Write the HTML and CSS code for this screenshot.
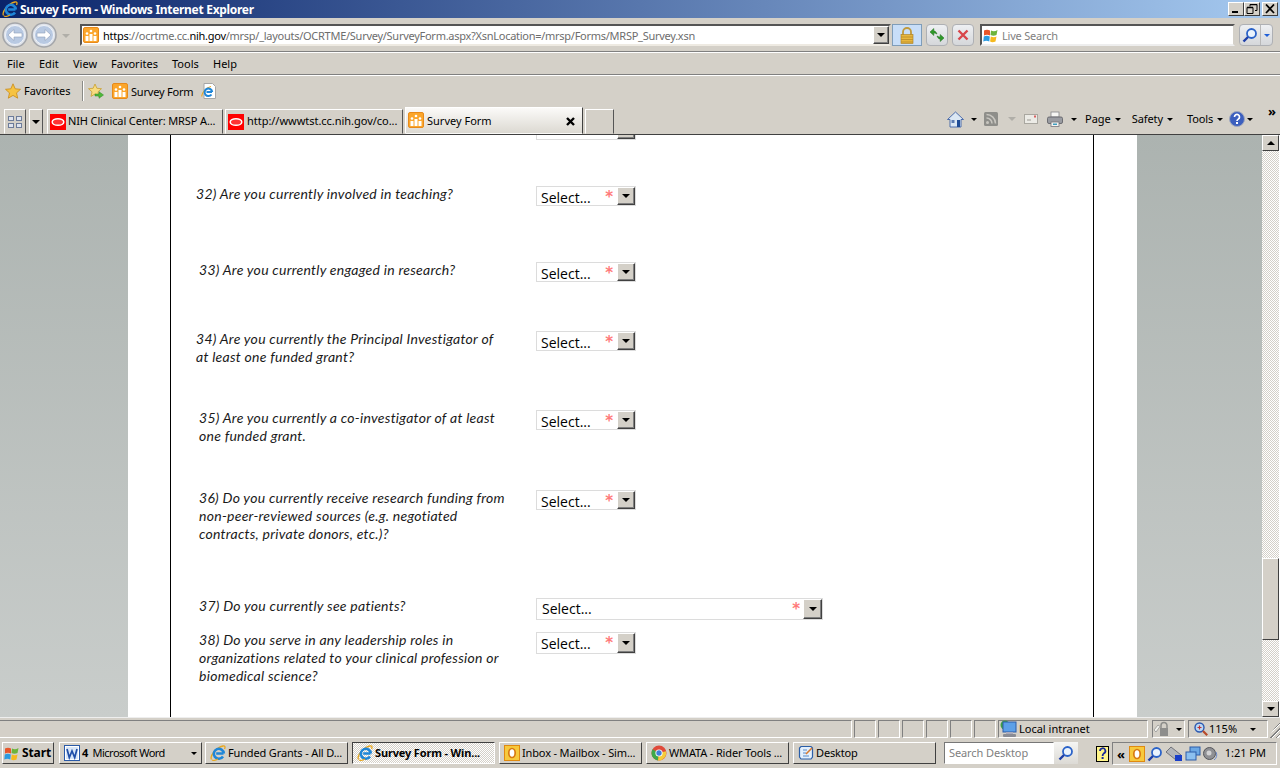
FILE: index.html
```html
<!DOCTYPE html>
<html lang="en">
<head>
<meta charset="utf-8">
<title>Survey Form - Windows Internet Explorer</title>
<link rel="stylesheet" href="styles.css">
</head>
<body>
<svg class="sprite" width="0" height="0" aria-hidden="true">
  <defs>
    <symbol id="ie" viewBox="0 0 16 16">
      <path d="M1.500 14.500C-.5 11 6 2.500 13 1c2-.4 2.500 1 1.500 3" fill="none" stroke="#e8a820" stroke-width="1.300"/>
      <path d="M13.500 8.500H6.200M13 11.500a5 5 0 1 1 .8-3" fill="none" stroke="#1f86d8" stroke-width="2.600"/>
      <path d="M2 15c1.500 1 4 .2 6-1" fill="none" stroke="#e8a820" stroke-width="1.100"/>
    </symbol>
    <symbol id="iepage" viewBox="0 0 16 16">
      <path d="M3 .5h8.500l3 3v12H3z" fill="#fff" stroke="#a6a6a6"/>
      <path d="M1 13.500C0 10.500 5 4.500 10 3.500" fill="none" stroke="#e8a820" stroke-width="1.100"/>
      <path d="M11 9H5.500M10.500 11.500a3.800 3.800 0 1 1 .7-2.500" fill="none" stroke="#1f86d8" stroke-width="2"/>
    </symbol>
    <symbol id="hive" viewBox="0 0 16 16">
      <rect x=".5" y=".5" width="15" height="15" rx="1.500" fill="#fba62c" stroke="#e88a1a"/>
      <rect x="2.500" y="9" width="3" height="5" fill="#fff"/><rect x="6.500" y="7" width="3" height="7" fill="#fff"/><rect x="10.500" y="9" width="3" height="5" fill="#fff"/>
      <circle cx="4" cy="6.500" r="1.300" fill="#fff"/><circle cx="8" cy="4" r="1.300" fill="#fff"/><circle cx="12" cy="6.500" r="1.300" fill="#fff"/>
    </symbol>
    <symbol id="oracle" viewBox="0 0 16 16">
      <rect width="16" height="16" fill="#f00"/>
      <ellipse cx="8" cy="8" rx="5.800" ry="3.300" fill="#f33" stroke="#fff" stroke-width="1.500"/>
    </symbol>
    <symbol id="star" viewBox="0 0 16 16">
      <path d="M8 .8l2.200 5 5.300.5-4 3.600 1.200 5.300L8 12.400l-4.700 2.800 1.200-5.300-4-3.600 5.300-.5z" fill="#f6c342" stroke="#c98a18" stroke-width=".8"/>
    </symbol>
    <symbol id="addfav" viewBox="0 0 16 16">
      <path d="M7 1l1.900 4.300 4.600.4-3.500 3.100 1 4.600L7 11l-4 2.400 1-4.600L.5 5.700l4.600-.4z" fill="#f8dc80" stroke="#c9a030" stroke-width=".8"/>
      <path d="M7 11h4V8.700l4.500 3.300-4.500 3.300V13H7z" fill="#4fb83a" stroke="#2c8a20" stroke-width=".5"/>
    </symbol>
    <symbol id="back" viewBox="0 0 26 26">
      <circle cx="13" cy="13" r="12" fill="#dfe3ea" stroke="#a4a6aa" stroke-width="1.600"/>
      <circle cx="13" cy="13" r="9.500" fill="#b8c9e2" stroke="#eef2f8"/>
      <path d="M6 13l6-5.500V11h8v4h-8v3.500z" fill="#fff" stroke="#8f9eb8" stroke-width=".6"/>
    </symbol>
    <symbol id="forward" viewBox="0 0 26 26">
      <circle cx="13" cy="13" r="12" fill="#dfe3ea" stroke="#a4a6aa" stroke-width="1.600"/>
      <circle cx="13" cy="13" r="9.500" fill="#b8c9e2" stroke="#eef2f8"/>
      <path d="M20 13l-6-5.500V11H6v4h8v3.500z" fill="#fff" stroke="#8f9eb8" stroke-width=".6"/>
    </symbol>
    <symbol id="lock" viewBox="0 0 14 17">
      <path d="M3 8V5a4 4 0 0 1 8 0v3" fill="none" stroke="#c09a3c" stroke-width="1.800"/>
      <rect x="1" y="7.500" width="12" height="9" fill="#e8b73e" stroke="#a87c20" stroke-width=".6"/>
      <path d="M1 10h12M1 12.500h12M1 15h12" stroke="#b88a2a" stroke-width=".8"/>
    </symbol>
    <symbol id="refresh" viewBox="0 0 16 16">
      <path d="M8 7C7 4.500 6 4 4.800 4V1.500L1 5l3.800 3.500V6C6 6 6.800 6.500 8 7z" fill="#2f9a2a" stroke="#1f6e1c" stroke-width=".5"/>
      <path d="M8 9c1 2.500 2 3 3.200 3v2.500L15 11l-3.800-3.500V10C10 10 9.200 9.500 8 9z" fill="#2f9a2a" stroke="#1f6e1c" stroke-width=".5"/>
    </symbol>
    <symbol id="stop" viewBox="0 0 12 12">
      <path d="M1.500 1.500l9 9M10.500 1.500l-9 9" stroke="#d8454a" stroke-width="2.400"/>
    </symbol>
    <symbol id="winflag" viewBox="0 0 16 16">
      <path d="M1 3.500c2-1 4-1 6 0v5c-2-1-4-1-6 0z" fill="#e8562a"/>
      <path d="M8 3.500c2 1 4 1 6.500-.5l-1 5c-2 1-4 1-6 0z" fill="#6cb43c"/>
      <path d="M.8 9.500c2-1 4-1 6 0l-.5 5c-2-1-4-1-6 0z" fill="#2b9be0"/>
      <path d="M7.800 9.500c2 1 4 1 5.700 0l-1 5c-2 1-4 1-5.400 0z" fill="#f5b91e"/>
    </symbol>
    <symbol id="mag" viewBox="0 0 16 16">
      <circle cx="9.500" cy="6.500" r="4.500" fill="#eaf3fd" stroke="#2a62c8" stroke-width="1.800"/>
      <path d="M6 10l-4.500 4.500" stroke="#1f3fa8" stroke-width="2.400"/>
    </symbol>
    <symbol id="home" viewBox="0 0 17 17">
      <path d="M8.500 1L.5 8.500H3V16h11V8.500h2.500z" fill="#dce8f4" stroke="#3f62a6" stroke-width=".9"/>
      <rect x="4.500" y="9" width="3" height="3" fill="#5c7cb2"/><rect x="10" y="9" width="3" height="7" fill="#1f4c96"/>
    </symbol>
    <symbol id="feed" viewBox="0 0 14 14">
      <rect width="14" height="14" rx="1.500" fill="#8e8e8a"/>
      <circle cx="3.500" cy="10.500" r="1.500" fill="#c8c6c0"/>
      <path d="M2.500 6A5.500 5.500 0 0 1 8 11.500M2.500 2.500a9 9 0 0 1 9 9" fill="none" stroke="#c8c6c0" stroke-width="1.500"/>
    </symbol>
    <symbol id="mail" viewBox="0 0 14 10">
      <rect x=".5" y=".5" width="13" height="9" fill="#ecebe6" stroke="#a9a7a0"/>
      <rect x="10" y="1.500" width="2" height="2" fill="#d86060"/><path d="M3 6h4" stroke="#9c9a94"/>
    </symbol>
    <symbol id="printer" viewBox="0 0 16 16">
      <rect x="4" y="1" width="8" height="5" fill="#f6f6f4" stroke="#85858a" stroke-width=".8"/>
      <rect x=".5" y="6" width="15" height="6.500" rx="1.500" fill="#9a9ca2" stroke="#5b5c62" stroke-width=".8"/>
      <rect x="4" y="11" width="8" height="4.500" fill="#f2f2f0" stroke="#75757a" stroke-width=".8"/>
      <rect x="6" y="12.500" width="4" height="1.500" fill="#3f9ec0"/>
    </symbol>
    <symbol id="help" viewBox="0 0 16 16">
      <circle cx="8" cy="8" r="7.500" fill="#3c5fbe" stroke="#9da6bd"/>
      <path d="M5.500 6a2.500 2.500 0 1 1 3.800 2.100C8.400 8.700 8 9 8 10" fill="none" stroke="#fff" stroke-width="1.700"/>
      <rect x="7" y="11" width="2" height="2" fill="#fff"/>
    </symbol>
    <symbol id="word" viewBox="0 0 16 16">
      <rect x=".5" y=".5" width="15" height="15" fill="#fff" stroke="#2a5aa8"/>
      <rect x="2" y="2" width="12" height="12" fill="#d8e6f8"/>
      <path d="M3 4l2.300 8.500L8 6l2.700 6.500L13 4" fill="none" stroke="#1f4ea8" stroke-width="1.700"/>
    </symbol>
    <symbol id="outlook" viewBox="0 0 16 16">
      <rect x=".5" y=".5" width="15" height="15" fill="#f7c93c" stroke="#e08a10"/>
      <ellipse cx="8" cy="8" rx="3.200" ry="4.500" fill="#fff" stroke="#d87a10" stroke-width="1.700"/>
    </symbol>
    <symbol id="chrome" viewBox="0 0 16 16">
      <circle cx="8" cy="8" r="7.500" fill="#e04a3a"/>
      <path d="M8 8L1.500 4.200A7.500 7.500 0 0 0 7 15.400z" fill="#3ea84a"/>
      <path d="M8 8l7-1.800a7.500 7.500 0 0 1-8 9.200z" fill="#f4cc3a"/>
      <circle cx="8" cy="8" r="3.600" fill="#fff"/><circle cx="8" cy="8" r="2.700" fill="#3f7fd8"/>
    </symbol>
    <symbol id="desktop" viewBox="0 0 16 16">
      <path d="M3 1.500h10L14.500 3v9L13 14H3l-1.500-2V3z" fill="#e4f0fc" stroke="#2a5ea8" stroke-width="1.200"/>
      <path d="M5 5h4M5 8h3M5 11h6" stroke="#5a8ac8"/><path d="M8 9l6-6" stroke="#d87a30" stroke-width="1.600"/>
    </symbol>
    <symbol id="globe" viewBox="0 0 18 18">
      <circle cx="5" cy="5" r="4.500" fill="#3fa046"/>
      <rect x="3" y="2" width="13" height="10" fill="#5ca0e8" stroke="#2d5ca8"/>
      <rect x="6" y="12" width="7" height="2" fill="#aab"/><rect x="3" y="14" width="13" height="3" rx="1" fill="#8a8c94"/>
    </symbol>
    <symbol id="seclock" viewBox="0 0 18 16">
      <path d="M1 9l4-5 2 1.500L3 11z" fill="#f2f2ee" stroke="#8a8a88" stroke-width=".7"/>
      <path d="M8 7V4.500a3 3 0 0 1 6 0V7" fill="none" stroke="#8d8d8a" stroke-width="1.500"/>
      <rect x="7" y="7" width="8" height="8" fill="#8e8e8c"/>
    </symbol>
    <symbol id="zoom" viewBox="0 0 14 14">
      <circle cx="5.500" cy="5.500" r="4.500" fill="#bcd8f4" stroke="#2a58b0" stroke-width="1.400"/>
      <path d="M9 9l4.200 4.200" stroke="#b84a2a" stroke-width="2.200"/>
      <path d="M3.500 5.500h4M5.500 3.500v4" stroke="#c03030" stroke-width="1.200"/>
    </symbol>
    <symbol id="helpbook" viewBox="0 0 14 16">
      <rect x=".5" y=".5" width="12" height="15" fill="#fff58a" stroke="#000"/>
      <path d="M4 5a2.700 2.700 0 1 1 3.800 2.400C7 8 6.600 8.500 6.600 10" fill="none" stroke="#1a2a9a" stroke-width="1.800"/>
      <rect x="5.600" y="11" width="2" height="2" fill="#1a2a9a"/>
    </symbol>
    <symbol id="traynet" viewBox="0 0 16 16">
      <rect x="5" y="1" width="10" height="8" fill="#6ca8e4" stroke="#2d5ca8"/><rect x="1" y="6" width="10" height="8" fill="#8cc0f0" stroke="#2d5ca8"/>
    </symbol>
    <symbol id="traydrive" viewBox="0 0 18 16">
      <path d="M1 6l5-5 10 8-5 5z" fill="#b4b6ba" stroke="#70727a"/><rect x="10" y="9" width="7" height="6" fill="#1a3ec8"/>
    </symbol>
    <symbol id="traysound" viewBox="0 0 16 16">
      <circle cx="6.500" cy="7.500" r="6" fill="#8f9094" stroke="#55565c"/><circle cx="6" cy="7" r="2.500" fill="#d2d2d4"/>
      <path d="M13 6a6 6 0 0 1-2 8" fill="none" stroke="#6a88c8"/>
    </symbol>
    <symbol id="cap-min" viewBox="0 0 12 10"><rect x="2" y="7" width="6" height="2" fill="#000"/></symbol>
    <symbol id="cap-max" viewBox="0 0 12 10"><path d="M4.500 2.500V.5h7v6h-2M1.500 3.500h6v6h-6z" transform="translate(-.5 0)" fill="none" stroke="#000"/><path d="M4 .5h7M1 3.500h6" stroke="#000" stroke-width="1.400"/></symbol>
    <symbol id="cap-close" viewBox="0 0 12 10"><path d="M2 .5l8 8.500M10 .5L2 9" stroke="#000" stroke-width="1.800"/></symbol>
    <symbol id="tabx" viewBox="0 0 9 9"><path d="M1 1l7 7M8 1L1 8" stroke="#000" stroke-width="2.400"/></symbol>
  </defs>
</svg>

<div class="window">
  <header class="titlebar">
    <svg class="ic16 title-ic"><use href="#ie"/></svg>
    <span class="title-text">Survey Form - Windows Internet Explorer</span>
    <div class="winbtns">
      <span class="winbtn"><svg class="capglyph"><use href="#cap-min"/></svg></span>
      <span class="winbtn"><svg class="capglyph"><use href="#cap-max"/></svg></span>
      <span class="winbtn winbtn-close"><svg class="capglyph"><use href="#cap-close"/></svg></span>
    </div>
  </header>

  <div class="addressbar">
    <svg class="navbtn"><use href="#back"/></svg>
    <svg class="navbtn nav-fwd"><use href="#forward"/></svg>
    <span class="tri tri-pale nav-drop"></span>
    <div class="urlbox">
      <svg class="ic16"><use href="#hive"/></svg>
      <span class="url"><b>https</b>://ocrtme.cc.<b>nih.gov</b>/mrsp/_layouts/OCRTME/Survey/SurveyForm.aspx?XsnLocation=/mrsp/Forms/MRSP_Survey.xsn</span>
      <span class="dropbtn url-drop"><span class="tri"></span></span>
    </div>
    <span class="lockbtn"><svg class="ic-lock"><use href="#lock"/></svg></span>
    <span class="softbtn"><svg class="ic16"><use href="#refresh"/></svg></span>
    <span class="softbtn stopbtn"><svg class="ic12"><use href="#stop"/></svg></span>
    <div class="searchbox">
      <svg class="ic16"><use href="#winflag"/></svg>
      <span class="searchhint">Live Search</span>
    </div>
    <div class="searchgo">
      <span class="go-mag"><svg class="ic16"><use href="#mag"/></svg></span>
      <span class="go-drop"><span class="tri tri-blue"></span></span>
    </div>
  </div>

  <nav class="menubar">
    <span class="m-file">File</span><span class="m-edit">Edit</span><span class="m-view">View</span><span class="m-fav">Favorites</span><span class="m-tools">Tools</span><span>Help</span>
  </nav>

  <div class="favbar">
    <svg class="ic16"><use href="#star"/></svg>
    <span class="fav-label">Favorites</span>
    <span class="fav-sep"></span>
    <svg class="ic16 fav-add"><use href="#addfav"/></svg>
    <svg class="ic16 fav-hive"><use href="#hive"/></svg>
    <span class="fav-link">Survey Form</span>
    <svg class="ic16 fav-page"><use href="#iepage"/></svg>
  </div>

  <div class="tabbar">
    <span class="quick"><span class="quickgrid"><i></i><i></i><i></i><i></i></span></span>
    <span class="quickdrop"><span class="tri"></span></span>
    <span class="tab tab-1"><svg class="ic16"><use href="#oracle"/></svg><span class="tab-text">NIH Clinical Center: MRSP A...</span></span>
    <span class="tab tab-2"><svg class="ic16"><use href="#oracle"/></svg><span class="tab-text">http://wwwtst.cc.nih.gov/co...</span></span>
    <span class="tab tab-active"><svg class="ic16"><use href="#hive"/></svg><span class="tab-text">Survey Form</span><svg class="tab-close"><use href="#tabx"/></svg></span>
    <span class="tab tab-new"></span>
    <div class="tools">
      <svg class="tool-home"><use href="#home"/></svg><span class="tri tool-a1"></span>
      <svg class="tool-feed"><use href="#feed"/></svg><span class="tri tri-pale tool-a2"></span>
      <svg class="tool-mail"><use href="#mail"/></svg>
      <svg class="tool-print"><use href="#printer"/></svg><span class="tri tool-a3"></span>
      <span class="tool-label t-page">Page<span class="tri"></span></span>
      <span class="tool-label t-safety">Safety<span class="tri"></span></span>
      <span class="tool-label t-tools">Tools<span class="tri"></span></span>
      <svg class="ic16 tool-help"><use href="#help"/></svg><span class="tri tool-a4"></span>
      <span class="chev">»</span>
    </div>
  </div>

  <main class="viewport">
    <div class="gutter gutter-left"></div>
    <div class="page">
      <div class="frame">
        <form class="survey">
          <div class="question"></div>
          <div class="select"><span class="dropbtn"><span class="tri"></span></span></div>

          <div class="question">32) Are you currently involved in teaching?</div>
          <div class="select"><span class="select-text">Select...</span><span class="req">*</span><span class="dropbtn"><span class="tri"></span></span></div>

          <div class="question q-in">33) Are you currently engaged in research?</div>
          <div class="select"><span class="select-text">Select...</span><span class="req">*</span><span class="dropbtn"><span class="tri"></span></span></div>

          <div class="question">34) Are you currently the Principal Investigator of<br>at least one funded grant?</div>
          <div class="select"><span class="select-text">Select...</span><span class="req">*</span><span class="dropbtn"><span class="tri"></span></span></div>

          <div class="question q-in">35) Are you currently a co-investigator of at least<br>one funded grant.</div>
          <div class="select"><span class="select-text">Select...</span><span class="req">*</span><span class="dropbtn"><span class="tri"></span></span></div>

          <div class="question q-in">36) Do you currently receive research funding from<br>non-peer-reviewed sources (e.g. negotiated<br>contracts, private donors, etc.)?</div>
          <div class="select"><span class="select-text">Select...</span><span class="req">*</span><span class="dropbtn"><span class="tri"></span></span></div>

          <div class="question q-in">37) Do you currently see patients?</div>
          <div class="select select-wide"><span class="select-text">Select...</span><span class="req">*</span><span class="dropbtn"><span class="tri"></span></span></div>

          <div class="question q-in">38) Do you serve in any leadership roles in<br>organizations related to your clinical profession or<br>biomedical science?</div>
          <div class="select select-tall"><span class="select-text">Select...</span><span class="req">*</span><span class="dropbtn"><span class="tri"></span></span></div>
        </form>
      </div>
    </div>
    <div class="gutter gutter-right"></div>
    <div class="scrollbar">
      <span class="sb-btn"><span class="tri tri-up"></span></span>
      <span class="sb-track sb-track-top"></span>
      <span class="sb-thumb"></span>
      <span class="sb-track"></span>
      <span class="sb-btn"><span class="tri"></span></span>
    </div>
  </main>

  <div class="statusbar">
    <span class="st-pane st-main"></span>
    <span class="st-pane st-small"></span><span class="st-pane st-small"></span><span class="st-pane st-small"></span><span class="st-pane st-small"></span><span class="st-pane st-small"></span><span class="st-pane st-small"></span>
    <span class="st-pane st-zone"><svg class="ic-globe"><use href="#globe"/></svg><span class="st-text">Local intranet</span></span>
    <span class="st-pane st-sec"><svg class="ic-sec"><use href="#seclock"/></svg><span class="tri"></span></span>
    <span class="st-pane st-zoom"><svg class="ic-zoom"><use href="#zoom"/></svg><span class="st-text">115%</span><span class="tri"></span></span>
    <span class="grip"></span>
  </div>

  <footer class="taskbar">
    <span class="task task-start"><svg class="ic16"><use href="#winflag"/></svg>Start</span>
    <span class="task task-word"><svg class="ic16"><use href="#word"/></svg><span class="task-text"><b>4</b>&nbsp; Microsoft Word</span><span class="tri"></span></span>
    <span class="task"><svg class="ic16"><use href="#ie"/></svg><span class="task-text">Funded Grants - All D...</span></span>
    <span class="task task-active"><svg class="ic16"><use href="#ie"/></svg><span class="task-text">Survey Form - Win...</span></span>
    <span class="task"><svg class="ic16"><use href="#outlook"/></svg><span class="task-text">Inbox - Mailbox - Sim...</span></span>
    <span class="task"><svg class="ic16"><use href="#chrome"/></svg><span class="task-text">WMATA - Rider Tools ...</span></span>
    <span class="task"><svg class="ic16"><use href="#desktop"/></svg><span class="task-text">Desktop</span></span>
    <div class="desk-search">
      <span class="desk-input">Search Desktop</span>
      <span class="desk-go"><svg class="ic16"><use href="#mag"/></svg></span>
    </div>
    <svg class="tray-help"><use href="#helpbook"/></svg>
    <div class="tray">
      <span class="tray-chev">«</span>
      <svg class="ic16"><use href="#outlook"/></svg>
      <svg class="ic16"><use href="#mag"/></svg>
      <svg class="tray-drive"><use href="#traydrive"/></svg>
      <svg class="ic16"><use href="#traynet"/></svg>
      <svg class="ic16"><use href="#traysound"/></svg>
      <span class="clock">1:21 PM</span>
    </div>
  </footer>
</div>
</body>
</html>
```

FILE: styles.css
```css
* { box-sizing: border-box; }
html, body { margin: 0; padding: 0; height: 100%; overflow: hidden; }
body { background: #d4d0c8; font-family: "Noto Sans", Tahoma, sans-serif; font-size: 11px; color: #000; }
.sprite { position: absolute; }
svg { display: block; flex: none; }
.window { width: 1280px; height: 768px; display: flex; flex-direction: column; }
.ic16 { width: 16px; height: 16px; }
.ic12 { width: 12px; height: 12px; }

.tri { display: inline-block; width: 0; height: 0; border-style: solid; border-color: #000 transparent transparent; border-width: 3px 3px 0; flex: none; }
.tri-pale { border-width: 4px 4px 0; border-top-color: #b0aea8; }
.tri-blue { border-top-color: #1f5fd8; }
.dropbtn .tri, .sb-btn .tri, .quickdrop .tri { border-width: 4px 4px 0; }
.sb-btn .tri-up { border-width: 0 4px 4px; border-color: transparent transparent #000; }

/* title bar */
.titlebar { height: 18px; display: flex; align-items: center; padding-left: 2px; background: linear-gradient(90deg, #0a246a, #a6caf0); }
.title-text { margin-left: 2px; color: #fff; font-weight: 700; font-size: 12px; letter-spacing: -.3px; white-space: nowrap; }
.winbtns { margin-left: auto; display: flex; padding-right: 2px; }
.winbtn { width: 16px; height: 14px; background: #d4d0c8; border: 1px solid; border-color: #fff #404040 #404040 #fff; display: flex; align-items: center; justify-content: center; }
.winbtn-close { margin-left: 2px; }
.capglyph { width: 12px; height: 10px; }

/* address row */
.addressbar { height: 33px; display: flex; align-items: center; padding: 1px 0 0 2px; }
.navbtn { width: 26px; height: 26px; }
.nav-fwd { margin-left: 3px; }
.nav-drop { margin: 2px 0 0 5px; }
.urlbox { margin-left: 10px; width: 811px; height: 22px; background: #fff; border: 2px solid; border-color: #555 #d4d0c8 #eeeae2 #555; display: flex; align-items: center; padding-left: 1px; }
.url { margin-left: 4px; color: #6d6d6d; white-space: nowrap; letter-spacing: -.27px; }
.url b { color: #000; font-weight: 400; }
.url-drop { margin-left: auto; height: 18px; width: 16px; }
.dropbtn { background: #d4d0c8; border: 1px solid; border-color: #fff #404040 #404040 #fff; display: flex; align-items: center; justify-content: center; box-shadow: inset -1px -1px 0 #808080; }
.lockbtn { margin-left: 1px; width: 30px; height: 22px; background: #c8def8; border: 1px solid #7f9db9; display: flex; align-items: center; justify-content: center; }
.ic-lock { width: 14px; height: 17px; }
.softbtn { margin-left: 4px; width: 22px; height: 22px; border: 1px solid #aeb0b4; border-radius: 4px; background: linear-gradient(#eef0f3, #d5d7da); display: flex; align-items: center; justify-content: center; }
.searchbox { margin-left: 6px; width: 255px; height: 22px; background: #fff; border: 2px solid; border-color: #555 #d4d0c8 #eee #555; display: flex; align-items: center; padding-left: 1px; }
.searchhint { margin-left: 3px; color: #7f7f7f; letter-spacing: -.2px; }
.searchgo { margin-left: 4px; width: 34px; height: 22px; border: 1px solid #aeb0b4; border-radius: 4px; display: flex; background: linear-gradient(#eef0f3, #d5d7da); }
.go-mag { width: 21px; display: flex; align-items: center; justify-content: center; border-right: 1px solid #b8b8b8; }
.go-drop { flex: 1; display: flex; align-items: center; justify-content: center; }

/* menu */
.menubar { height: 23px; border-top: 1px solid #808080; box-shadow: inset 0 1px 0 #fff; display: flex; align-items: center; padding-left: 7px; }
.m-file { width: 32px; } .m-edit { width: 34px; } .m-view { width: 38px; } .m-fav { width: 61px; } .m-tools { width: 41px; }

/* favourites */
.favbar { height: 33px; border-top: 1px solid #808080; box-shadow: inset 0 1px 0 #fff; display: flex; align-items: center; padding: 0 0 0 5px; }
.fav-label { margin: 0 0 1px 3px; width: 46px; letter-spacing: -.05px; }
.fav-sep { width: 2px; height: 20px; margin-left: 12px; background: #8a8a86; border-right: 1px solid #fff; }
.fav-add { margin-left: 4px; }
.fav-hive { margin-left: 8px; }
.fav-link { margin-left: 3px; width: 67px; white-space: nowrap; letter-spacing: -.2px; }
.fav-page { margin-left: 3px; }

/* tabs */
.tabbar { height: 28px; display: flex; align-items: flex-end; padding-left: 4px; border-bottom: 1px solid #404040; position: relative; }
.quick, .quickdrop, .tab { height: 25px; border: 1px solid; border-color: #fff #555 transparent #fff; display: flex; align-items: center; }
.quick { width: 22px; justify-content: center; margin-right: 3px; }
.quickgrid { display: grid; grid-template-columns: 6px 6px; gap: 2px; }
.quickgrid i { height: 5px; border: 1px solid #6d7c9a; background: #dfe4ee; }
.quickdrop { width: 14px; justify-content: center; margin-right: 4px; }
.tab { width: 176px; margin-right: 2px; padding-left: 2px; }
.tab-2 { width: 178px; }
.tab-text { margin-left: 3px; white-space: nowrap; }
.tab-1 .tab-text { margin: 0 0 2px 2px; letter-spacing: -.13px; }
.tab-2 .tab-text { margin: 0 0 2px 3px; letter-spacing: -.03px; }
.tab-active { width: 178px; height: 27px; margin-right: 2px; background: linear-gradient(#fbfaf8, #dcd9d2); border-color: #fff #404040 transparent #fff; padding-bottom: 1px; }
.tab-close { width: 9px; height: 9px; margin: 2px 7px 0 auto; }
.tab-new { width: 29px; }
.tools { position: absolute; inset: 0; pointer-events: none; display: flex; align-items: center; padding: 0 0 3px 947px; }
.tool-home { width: 17px; height: 17px; }
.tool-a1 { margin-left: 7px; }
.tool-feed { width: 14px; height: 14px; margin-left: 7px; }
.tool-a2 { margin-left: 10px; }
.tool-mail { width: 14px; height: 10px; margin-left: 8px; }
.tool-print { width: 16px; height: 16px; margin-left: 9px; }
.tool-a3 { margin-left: 8px; }
.tool-label { display: flex; align-items: center; gap: 4px; margin-top: -1px; }
.tool-label .tri { margin-top: 2px; }
.t-page { margin-left: 8px; }
.t-safety { margin-left: 11px; letter-spacing: -.1px; }
.t-tools { margin-left: 14px; letter-spacing: -.1px; }
.tool-help { margin-left: 6px; }
.tool-a4 { margin-left: 2px; }
.chev { margin: -16px 4px 0 auto; font-size: 13px; font-weight: 700; line-height: 1; }

/* page */
.viewport { flex: none; height: 582px; display: flex; overflow: hidden; background: #fff; }
.gutter { background: linear-gradient(#acb3b0, #c9cdcb); }
.gutter-left { width: 128px; }
.gutter-right { width: 125px; }
.page { width: 1009px; padding-left: 42px; padding-right: 43px; background: #fff; }
.frame { display: flow-root; width: 924px; height: 100%; border: solid #000; border-width: 0 1px; padding-left: 25px; }
.survey { margin-top: -16px; display: grid; grid-template-columns: 340px 1fr; grid-template-rows: 66px 76px 69px 79px 80px 108px 34px auto; align-items: start; }
.question { font-family: Lato, "Open Sans", sans-serif; font-style: italic; font-size: 14px; line-height: 18px; letter-spacing: .26px; color: #1a1a1a; white-space: nowrap; }
.q-in { padding-left: 3px; }
.select { margin-top: 1px; width: 100px; height: 20px; border: 1px solid #dcdcdc; background: #fff; display: flex; position: relative; }
.select-text { font-family: "Open Sans", sans-serif; font-size: 14px; line-height: 20px; padding: 1px 0 0 4px; white-space: nowrap; }
.req { position: absolute; right: 22px; top: 5px; color: #ff7a7a; font-family: "DejaVu Sans", sans-serif; font-size: 15px; line-height: 11px; font-weight: 700; }
.select .dropbtn { position: absolute; right: 0; top: 0; bottom: 0; width: 18px; }
.select-wide { width: 287px; height: 22px; }
.select-wide .select-text { padding: 0 0 0 5px; }
.select-wide .dropbtn { width: 19px; }
.select-tall { height: 22px; }

/* scrollbar */
.scrollbar { width: 18px; display: flex; flex-direction: column; background: #fff; padding-right: 1px; }
.sb-btn { height: 16px; flex: none; background: #d4d0c8; border: 1px solid; border-color: #fff #404040 #404040 #fff; display: flex; align-items: center; justify-content: center; }
.sb-track { flex: 1; background: repeating-conic-gradient(#d4d0c8 0 25%, #fff 0 50%) 0 0 / 2px 2px; }
.sb-track-top { flex: none; height: 407px; }
.sb-thumb { height: 82px; flex: none; background: #d4d0c8; border: 1px solid; border-color: #fff #404040 #404040 #fff; }

/* status bar */
.statusbar { height: 21px; border-top: 1px solid #eee; padding-top: 2px; display: flex; }
.st-pane { height: 18px; border: 1px solid; border-color: #808080 #fff #fff #808080; display: flex; align-items: center; flex: none; }
.st-text { margin-bottom: 2px; }
.st-main { width: 852px; border-left: 0; }
.st-small { width: 22px; margin-left: 2px; }
.st-zone { width: 150px; margin-left: 2px; padding-left: 1px; }
.ic-globe { width: 18px; height: 18px; margin-right: 1px; }
.st-sec { width: 33px; margin-left: 4px; gap: 5px; }
.ic-sec { width: 18px; height: 16px; }
.st-zoom { width: 80px; margin-left: 3px; padding-left: 5px; }
.ic-zoom { width: 14px; height: 14px; margin-right: 1px; }
.st-zoom .tri { margin-left: 13px; }
.grip { width: 12px; height: 18px; background: repeating-linear-gradient(135deg, #d4d0c8 0 2px, #808080 2px 3px, #fff 3px 4px); clip-path: polygon(100% 0, 100% 100%, 0 100%); }

/* taskbar */
.taskbar { flex: 1; display: flex; align-items: flex-start; padding: 4px 0 0 2px; }
.task { width: 143px; height: 22px; margin-right: 4px; border: 1px solid; border-color: #fff #404040 #404040 #fff; display: flex; align-items: center; padding: 0 0 2px 4px; white-space: nowrap; }
.task svg { margin-bottom: -2px; }
.task-text { margin-left: 2px; letter-spacing: -.15px; }
.task-text b { font-weight: 700; }
.task-start { width: 52px; margin-right: 5px; padding-left: 1px; font-weight: 700; font-size: 12px; letter-spacing: -.1px; gap: 2px; }
.task-word { padding-right: 4px; margin-right: 3px; }
.task-word .task-text { letter-spacing: -.5px; margin-left: 2px; }
.task-word .tri { margin: 2px 0 0 auto; }
.task-active { font-weight: 700; border-color: #404040 #fff #fff #404040; background: repeating-conic-gradient(#d4d0c8 0 25%, #fff 0 50%) 0 0 / 2px 2px; }
.desk-search { margin-left: 4px; display: flex; height: 22px; }
.desk-input { width: 110px; background: #fff; border: 1px solid; border-color: #777 #fff #fff #777; color: #808080; padding: 2px 0 0 4px; letter-spacing: -.1px; }
.desk-go { width: 24px; background: linear-gradient(#f5f5f3, #dcdad5); display: flex; align-items: center; justify-content: center; }
.tray-help { width: 14px; height: 16px; margin: 4px 0 0 18px; }
.tray { margin: 0 3px 0 2px; flex: 1; height: 23px; border: 1px solid; border-color: #808080 #fff #fff #808080; display: flex; align-items: center; padding-left: 4px; }
.tray-chev { font-size: 13px; font-weight: 700; width: 12px; }
.tray svg { margin-right: 2px; }
.tray-drive { width: 18px; height: 16px; }
.clock { margin: 0 10px 2px auto; }
```
